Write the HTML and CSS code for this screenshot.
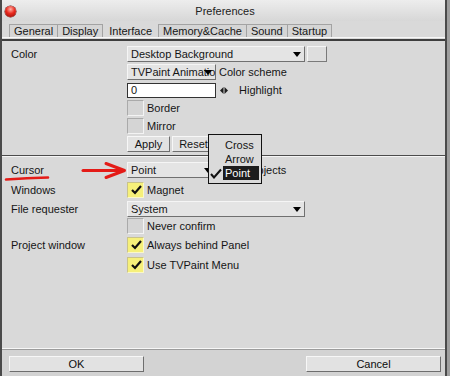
FILE: index.html
```html
<!DOCTYPE html>
<html lang="en">
<head>
  <meta charset="UTF-8" />
  <title>Preferences</title>
  <link rel="stylesheet" href="styles.css">
</head>
<body>

  <div class="window">
    <div class="titlebar">
      <span class="close"></span>
      <span class="title">Preferences</span>
      <span></span>
    </div>

    <div class="tabs">
      <span class="tab">General</span>
      <span class="tab">Display</span>
      <span class="tab active">Interface</span>
      <span class="tab">Memory&amp;Cache</span>
      <span class="tab">Sound</span>
      <span class="tab">Startup</span>
    </div>

    <div class="panel">
      <div class="section first">
        <div class="row">
          <span class="label">Color</span>
          <div class="select">Desktop Background</div>
          <span class="swatch"></span>
        </div>
        <div class="row">
          <span class="label"></span>
          <div class="select narrow">TVPaint Animatio</div>
          <span class="text">Color scheme</span>
        </div>
        <div class="row">
          <span class="label"></span>
          <div class="field">0</div>
          <svg class="spin" width="8" height="7" viewBox="0 0 8 7">
            <polygon points="0,3.5 3.5,0 3.5,7" fill="#1e1e1e"/>
            <polygon points="4.5,0 8,3.5 4.5,7" fill="#1e1e1e"/>
          </svg>
          <span class="spin-label">Highlight</span>
        </div>
        <div class="row">
          <span class="label"></span>
          <span class="check"></span>
          <span>Border</span>
        </div>
        <div class="row">
          <span class="label"></span>
          <span class="check"></span>
          <span>Mirror</span>
        </div>
        <div class="row">
          <span class="label"></span>
          <span class="btn">Apply</span>
          <span class="btn">Reset</span>
        </div>
      </div>

      <div class="section second">
        <div class="row tall">
          <span class="label">Cursor</span>
          <div class="select narrow">Point</div>
          <span class="extra">Objects</span>
        </div>
        <div class="row tall">
          <span class="label">Windows</span>
          <span class="check on">
            <svg width="15" height="14" viewBox="0 0 15 14"><polyline points="4,7 7,10 13,3" fill="none" stroke="#111" stroke-width="2.2"/></svg>
          </span>
          <span>Magnet</span>
        </div>
        <div class="row short">
          <span class="label">File requester</span>
          <div class="select">System</div>
        </div>
        <div class="row">
          <span class="label"></span>
          <span class="check"></span>
          <span>Never confirm</span>
        </div>
        <div class="row tall">
          <span class="label">Project window</span>
          <span class="check on">
            <svg width="15" height="14" viewBox="0 0 15 14"><polyline points="4,7 7,10 13,3" fill="none" stroke="#111" stroke-width="2.2"/></svg>
          </span>
          <span>Always behind Panel</span>
        </div>
        <div class="row tall">
          <span class="label"></span>
          <span class="check on">
            <svg width="15" height="14" viewBox="0 0 15 14"><polyline points="4,7 7,10 13,3" fill="none" stroke="#111" stroke-width="2.2"/></svg>
          </span>
          <span>Use TVPaint Menu</span>
        </div>
      </div>

      <!-- open cursor menu -->
      <div class="popup">
        <div class="item"><span class="mark"></span><span class="name">Cross</span></div>
        <div class="item"><span class="mark"></span><span class="name">Arrow</span></div>
        <div class="item">
          <span class="mark">
            <svg width="12" height="11" viewBox="0 0 12 11"><polyline points="1,6 4,9.5 11,1.5" fill="none" stroke="#111" stroke-width="2"/></svg>
          </span>
          <span class="name selected">Point</span>
        </div>
      </div>

      <!-- red hand drawn notes -->
      <svg class="notes" width="443" height="306" viewBox="0 0 443 306">
        <path d="M4 138.5 Q25 137 46 136.5" fill="none" stroke="#e41b17" stroke-width="2.6" stroke-linecap="round"/>
        <path d="M81 129.5 L121 129.5" fill="none" stroke="#e41b17" stroke-width="3" stroke-linecap="round"/>
        <path d="M104 122.5 L122.5 129.5 L104 136.5" fill="none" stroke="#e41b17" stroke-width="3" stroke-linecap="round" stroke-linejoin="round"/>
      </svg>
    </div>

    <div class="buttons">
      <span class="btn wide">OK</span>
      <span class="btn wide">Cancel</span>
    </div>
  </div>

</body>
</html>
```

FILE: styles.css
```css
* {
  box-sizing: border-box;
}

body {
  margin: 0;
  background: #9e9e9e;
  font-family: "Liberation Sans", Arial, sans-serif;
  font-size: 11px;
  color: #151515;
}

.window {
  width: 447px;
  height: 376px;
  background: #d9d9d9;
  border-left: 2px solid #4a4a4a;
  border-right: 2px solid #4a4a4a;
  display: flex;
  flex-direction: column;
}

.titlebar {
  flex: none;
  height: 21px;
  padding-left: 3px;
  display: grid;
  grid-template-columns: 1fr auto 1fr;
  align-items: center;
  background: linear-gradient(#ededed, #d7d7d7);
}

.close {
  width: 11px;
  height: 11px;
  margin-top: 2px;
  border-radius: 50%;
  background: radial-gradient(circle at 50% 30%, #ffb2a6 0, #ea2a1f 45%, #8e0a05 100%);
  box-shadow: 0 0 0 0.5px #6d1410;
}

.title {
  color: #222;
}

.tabs {
  flex: none;
  display: flex;
  padding: 3px 0 0 7px;
  border-bottom: 1px solid #f7f7f7;
  margin-bottom: 1px;
}

.tab {
  height: 13px;
  line-height: 13px;
  padding: 0 4px;
  margin-right: -1px;
  border: 1px solid #a3a3a3;
  border-bottom: none;
  background: #d5d5d5;
}

.tab.active {
  border-color: transparent;
  background: transparent;
  padding: 0 6px;
}

.panel {
  flex: 1;
  position: relative;
  border-top: 2px solid #3e3e3e;
  border-bottom: 1px solid #f7f7f7;
}

.section {
  padding: 4px 0 2px 9px;
}

.section.first {
  border-bottom: 1px solid #4c4c4c;
}

.section.second {
  padding-top: 3px;
  border-top: 1px solid #f5f5f5;
}

.row {
  display: flex;
  align-items: center;
  height: 18px;
}

.row.tall {
  height: 20px;
}

.row.short {
  height: 17px;
}

.label {
  width: 116px;
  flex: none;
}

.select {
  position: relative;
  width: 178px;
  height: 16px;
  line-height: 14px;
  padding: 0 14px 0 3px;
  white-space: nowrap;
  overflow: hidden;
  background: #e4e4e4;
  border: 1px solid;
  border-color: #f5f5f5 #707070 #707070 #f5f5f5;
}

.select.narrow {
  width: 89px;
  padding-right: 0;
  overflow: visible;
}

.select::after {
  content: "";
  position: absolute;
  right: 3px;
  top: 5px;
  border-left: 4px solid transparent;
  border-right: 4px solid transparent;
  border-top: 5px solid #000;
}

.swatch {
  width: 20px;
  height: 16px;
  margin-left: 2px;
  background: #dedede;
  border: 1px solid;
  border-color: #f5f5f5 #7a7a7a #7a7a7a #f5f5f5;
}

.text {
  margin-left: 3px;
}

.field {
  width: 89px;
  height: 15px;
  line-height: 13px;
  padding-left: 3px;
  background: #fff;
  border: 1px solid #333;
}

.spin {
  margin-left: 4px;
}

.spin-label {
  margin-left: 11px;
}

.check {
  flex: none;
  width: 17px;
  height: 16px;
  margin-right: 3px;
  background: #d5d5d5;
  border: 1px solid;
  border-color: #aaaaaa #f3f3f3 #f3f3f3 #aaaaaa;
}

.check.on {
  background: #f6f07a;
  border-color: #c9c38a #fbf8c8 #fbf8c8 #c9c38a;
}

.check svg {
  display: block;
}

.btn {
  width: 43px;
  height: 16px;
  line-height: 14px;
  margin-right: 2px;
  text-align: center;
  background: #e2e2e2;
  border: 1px solid;
  border-color: #f7f7f7 #6e6e6e #6e6e6e #f7f7f7;
}

.extra {
  margin-left: 33px;
}

.popup {
  position: absolute;
  left: 206px;
  top: 93px;
  width: 54px;
  height: 50px;
  padding: 3px 0;
  background: #dadada;
  border: 1px solid #111;
}

.item {
  display: flex;
  height: 14px;
  line-height: 14px;
}

.mark {
  width: 14px;
  display: flex;
  align-items: center;
  padding-left: 1px;
}

.name {
  width: 36px;
  padding-left: 2px;
}

.name.selected {
  background: #1c1c1c;
  color: #fff;
}

.notes {
  position: absolute;
  left: 0;
  top: 0;
  pointer-events: none;
}

.buttons {
  flex: none;
  height: 27px;
  display: flex;
  justify-content: space-between;
  padding: 6px 4px 0 7px;
  background: #d3d3d3;
  border-top: 1px solid #9c9c9c;
}

.btn.wide {
  width: 135px;
  margin: 0;
  color: #0c0c0c;
}
```
